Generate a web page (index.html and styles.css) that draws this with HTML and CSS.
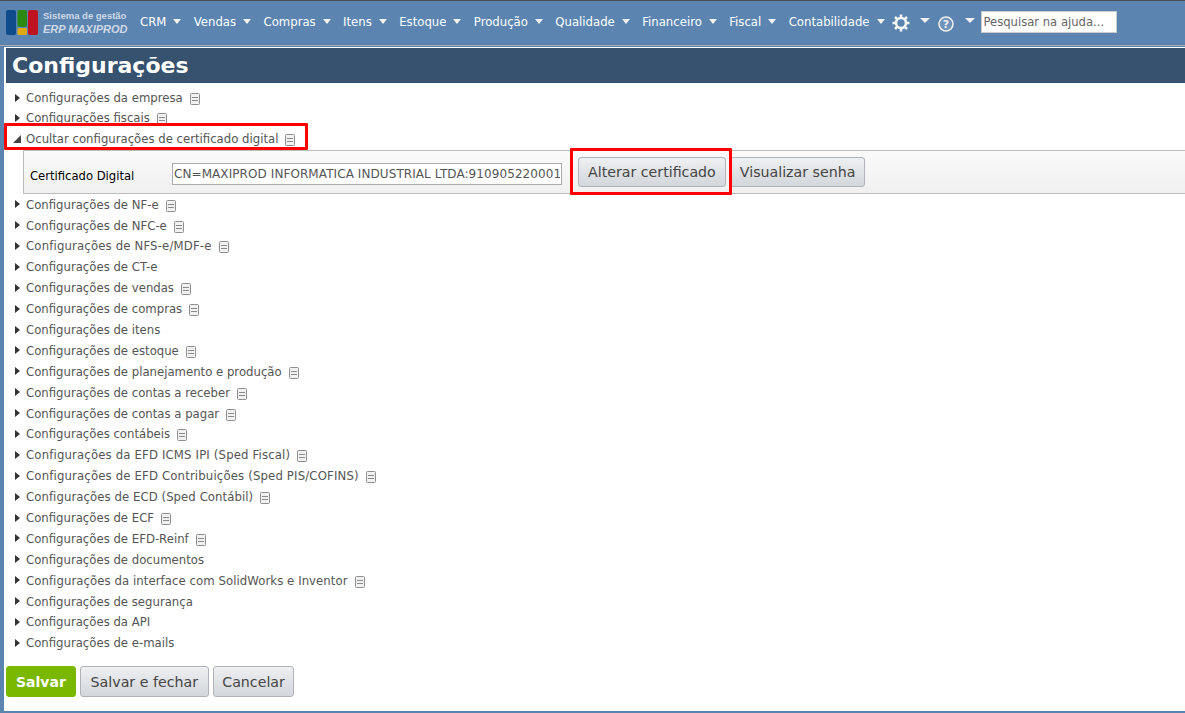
FILE: index.html
```html
<!DOCTYPE html>
<html lang="pt-BR">
<head>
    <meta charset="UTF-8">
    <title>Configurações - ERP MAXIPROD</title>
    <link rel="stylesheet" href="styles.css">
</head>
<body>
    <svg class="defs" width="0" height="0">
        <symbol id="doc" viewBox="0 0 10 12">
            <rect x="0.5" y="0.5" width="9" height="11" rx="1" fill="#f1f1f1" stroke="#8f8f8f"/>
            <path d="M2 4.5h6M2 7.5h6" stroke="#8a8a8a" fill="none"/>
        </symbol>
    </svg>
    <div class="topbar">
        <div class="logo">
            <svg width="33" height="25" viewBox="0 0 33 25">
                <rect x="0" y="0" width="10" height="25" rx="2" fill="#0f4c8c"/>
                <rect x="11.5" y="0" width="9.5" height="17" rx="2" fill="#2c8a10"/>
                <rect x="11.5" y="18" width="9.5" height="7" rx="1.5" fill="#e3a80f"/>
                <rect x="22" y="0" width="10" height="25" rx="2" fill="#bf1420"/>
            </svg>
            <div class="logo-text">
                <span class="logo-top">Sistema de gestão</span>
                <span class="logo-name">ERP MAXIPROD</span>
            </div>
        </div>
        <ul class="menu">
            <li>CRM</li>
            <li>Vendas</li>
            <li>Compras</li>
            <li>Itens</li>
            <li>Estoque</li>
            <li>Produção</li>
            <li>Qualidade</li>
            <li>Financeiro</li>
            <li>Fiscal</li>
            <li>Contabilidade</li>
        </ul>
        <svg class="gear" width="18" height="18" viewBox="0 0 18 18">
            <circle cx="9" cy="9" r="5" fill="none" stroke="#f4f4f4" stroke-width="2.6"/>
            <path d="M9 0.5v3.5M9 14v3.5M0.5 9h3.5M14 9h3.5M3 3l2.4 2.4M12.6 12.6l2.4 2.4M3 15l2.4-2.4M12.6 5.4l2.4-2.4" stroke="#f4f4f4" stroke-width="2.6"/>
        </svg>
        <span class="caret caret-gear"></span>
        <svg class="help" width="16" height="16" viewBox="0 0 16 16">
            <circle cx="8" cy="8" r="7" fill="#6f93bb" stroke="#eee" stroke-width="1.6"/>
            <text x="8" y="12" text-anchor="middle" class="help-mark">?</text>
        </svg>
        <span class="caret caret-help"></span>
        <input class="search" type="text" placeholder="Pesquisar na ajuda...">
    </div>

    <div class="page">
        <h1 class="title">Configurações</h1>
        <div class="tree">
            <div class="row"><span class="arrow"></span>Configurações da empresa<svg class="doc"><use href="#doc"/></svg></div>
            <div class="row"><span class="arrow"></span>Configurações fiscais<svg class="doc"><use href="#doc"/></svg></div>
            <div class="row open"><span class="arrow-open"></span>Ocultar configurações de certificado digital<svg class="doc"><use href="#doc"/></svg><span class="mark mark-row"></span></div>
            <div class="panel">
                <label class="panel-label">Certificado Digital</label>
                <input class="cert" type="text" value="CN=MAXIPROD INFORMATICA INDUSTRIAL LTDA:910905220001">
                <button class="btn btn-cert">Alterar certificado<span class="mark mark-btn"></span></button>
                <button class="btn">Visualizar senha</button>
            </div>
            <div class="row"><span class="arrow"></span>Configurações de NF-e<svg class="doc"><use href="#doc"/></svg></div>
            <div class="row"><span class="arrow"></span>Configurações de NFC-e<svg class="doc"><use href="#doc"/></svg></div>
            <div class="row wide"><span class="arrow"></span>Configurações de NFS-e/MDF-e<svg class="doc"><use href="#doc"/></svg></div>
            <div class="row"><span class="arrow"></span>Configurações de CT-e</div>
            <div class="row"><span class="arrow"></span>Configurações de vendas<svg class="doc"><use href="#doc"/></svg></div>
            <div class="row"><span class="arrow"></span>Configurações de compras<svg class="doc"><use href="#doc"/></svg></div>
            <div class="row"><span class="arrow"></span>Configurações de itens</div>
            <div class="row"><span class="arrow"></span>Configurações de estoque<svg class="doc"><use href="#doc"/></svg></div>
            <div class="row"><span class="arrow"></span>Configurações de planejamento e produção<svg class="doc"><use href="#doc"/></svg></div>
            <div class="row"><span class="arrow"></span>Configurações de contas a receber<svg class="doc"><use href="#doc"/></svg></div>
            <div class="row"><span class="arrow"></span>Configurações de contas a pagar<svg class="doc"><use href="#doc"/></svg></div>
            <div class="row"><span class="arrow"></span>Configurações contábeis<svg class="doc"><use href="#doc"/></svg></div>
            <div class="row wide"><span class="arrow"></span>Configurações da EFD ICMS IPI (Sped Fiscal)<svg class="doc"><use href="#doc"/></svg></div>
            <div class="row wide"><span class="arrow"></span>Configurações de EFD Contribuições (Sped PIS/COFINS)<svg class="doc"><use href="#doc"/></svg></div>
            <div class="row wide-sm"><span class="arrow"></span>Configurações de ECD (Sped Contábil)<svg class="doc"><use href="#doc"/></svg></div>
            <div class="row"><span class="arrow"></span>Configurações de ECF<svg class="doc"><use href="#doc"/></svg></div>
            <div class="row"><span class="arrow"></span>Configurações de EFD-Reinf<svg class="doc"><use href="#doc"/></svg></div>
            <div class="row"><span class="arrow"></span>Configurações de documentos</div>
            <div class="row wide-sm"><span class="arrow"></span>Configurações da interface com SolidWorks e Inventor<svg class="doc"><use href="#doc"/></svg></div>
            <div class="row"><span class="arrow"></span>Configurações de segurança</div>
            <div class="row"><span class="arrow"></span>Configurações da API</div>
            <div class="row"><span class="arrow"></span>Configurações de e-mails</div>
        </div>
        <div class="actions">
            <button class="btn btn-save">Salvar</button>
            <button class="btn">Salvar e fechar</button>
            <button class="btn btn-cancel">Cancelar</button>
        </div>
    </div>
</body>
</html>
```

FILE: styles.css
```css
html, body {
    height: 100%;
}
body {
    margin: 0;
    background: #5b84b1;
    font-family: 'DejaVu Sans', Verdana, sans-serif;
    font-size: 11.7px;
    color: #555;
    overflow: hidden;
}
.defs {
    display: block;
    height: 0;
}
.topbar {
    display: flex;
    align-items: center;
    height: 44px;
    border-top: 1px solid #4b4b55;
    border-bottom: 1px solid #a9a9a9;
    padding-left: 6px;
    background: #5b84b1;
    color: #fff;
}
.logo {
    display: flex;
    align-items: center;
    gap: 4px;
    width: 134px;
    margin-bottom: 2px;
}
.logo-text {
    display: flex;
    flex-direction: column;
    color: #cfd9e5;
    font-family: 'Liberation Sans', Arial, sans-serif;
    font-weight: bold;
}
.logo-top {
    font-size: 9.5px;
    line-height: 13px;
}
.logo-name {
    font-size: 11px;
    line-height: 14px;
    font-style: italic;
}
.menu {
    display: flex;
    list-style: none;
    margin: 0 0 2px 0;
    padding: 0;
    gap: 12.4px;
}
.menu li::after {
    content: "";
    display: inline-block;
    margin-left: 7px;
    vertical-align: 2px;
    border-left: 4.5px solid transparent;
    border-right: 4.5px solid transparent;
    border-top: 5px solid #f2f2f2;
}
.gear {
    margin-left: 7px;
}
.caret {
    width: 0;
    height: 0;
    border-left: 5px solid transparent;
    border-right: 5px solid transparent;
    border-top: 5px solid #f2f2f2;
    margin-bottom: 5px;
}
.caret-gear {
    margin-left: 10px;
    margin-right: 8px;
}
.caret-help {
    margin-left: 11px;
    margin-right: 6px;
}
.help {
    margin-top: 1px;
}
.help-mark {
    font-size: 11px;
    font-weight: bold;
    fill: #eee;
}
.search {
    width: 136px;
    height: 22px;
    box-sizing: border-box;
    padding: 0 2px;
    border: 1px solid #ccc;
    margin-bottom: 2px;
    font-family: inherit;
    font-size: 11.6px;
}
.search::placeholder {
    color: #666;
    opacity: 1;
}
.page {
    margin: 1px 0 0 4px;
    height: 664px;
    box-sizing: border-box;
    background: #fff;
    padding: 1px 0 0 2px;
}
.title {
    margin: 0;
    height: 35px;
    line-height: 36px;
    padding-left: 6px;
    background: #36526f;
    color: #fff;
    font-size: 22px;
    font-weight: bold;
}
.tree {
    padding-top: 5px;
}
.row {
    position: relative;
    display: flex;
    align-items: center;
    height: 20.9px;
    padding-left: 20px;
}
.row:first-child {
    height: 20px;
}
.wide {
    letter-spacing: 0.16px;
}
.wide-sm {
    letter-spacing: 0.07px;
}
.arrow {
    position: absolute;
    left: 9px;
    top: 6px;
    border-top: 4.5px solid transparent;
    border-bottom: 4.5px solid transparent;
    border-left: 5px solid #333;
}
.arrow-open {
    position: absolute;
    left: 7px;
    top: 6px;
    border-left: 8px solid transparent;
    border-bottom: 8px solid #444;
}
.doc {
    width: 10px;
    height: 12px;
    margin-left: 7px;
    margin-top: 2px;
}
.panel {
    display: flex;
    align-items: center;
    height: 44.4px;
    margin-left: 17px;
    box-sizing: border-box;
    padding-left: 6px;
    border: 1px solid #bbb;
    border-right: 0;
    background: linear-gradient(#fafafa, #f0f0f0);
}
.panel-label {
    width: 142px;
    color: #000;
    font-size: 11.6px;
    margin-top: 9px;
}
.cert {
    width: 390px;
    height: 22px;
    box-sizing: border-box;
    padding: 0 1px;
    border: 1px solid #aaa;
    font-family: inherit;
    font-size: 12px;
    letter-spacing: 0.08px;
    color: #555;
    margin: 5px 16px 0 0;
}
.btn {
    height: 30px;
    padding: 0 9px;
    border: 1px solid #b0b4ba;
    border-radius: 3px;
    background: linear-gradient(#eef0f2, #d3d6da);
    color: #444;
    font-family: inherit;
    font-size: 14.2px;
    cursor: pointer;
}
.btn-cert {
    position: relative;
    margin-right: 4px;
}
.actions .btn {
    height: 31px;
    padding: 0 9.8px;
}
.actions .btn-save {
    padding: 0 9px;
    border-color: #7ab800;
    background: #7ab800;
    color: #fff;
    font-weight: bold;
    font-size: 14px;
}
.actions .btn-cancel {
    padding: 0 8.5px;
}
.mark {
    position: absolute;
    border: 3px solid #f00;
    border-radius: 1px;
    pointer-events: none;
}
.mark-row {
    left: -2px;
    top: -6px;
    width: 298px;
    height: 21px;
}
.mark-btn {
    left: -9px;
    top: -10px;
    width: 156px;
    height: 41px;
}
.actions {
    display: flex;
    gap: 4px;
    margin-top: 12.6px;
}
```
